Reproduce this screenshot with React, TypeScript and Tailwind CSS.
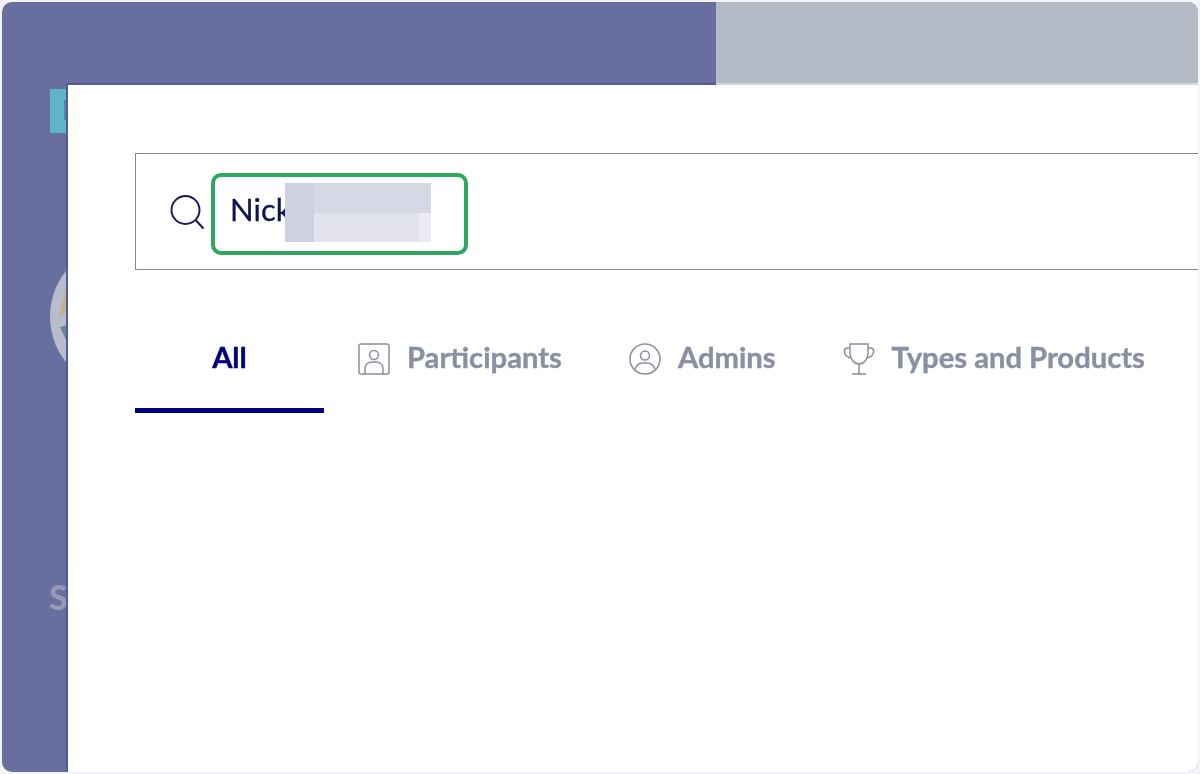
import React from 'react';

const fontLato = { fontFamily: 'Lato, "Liberation Sans", sans-serif' };

function SearchIcon() {
  return (
    <svg width="36" height="36" viewBox="0 0 36 36" fill="none" stroke="#1c1c5c" strokeWidth="2" className="shrink-0">
      <circle cx="16.5" cy="16" r="14" />
      <path d="M27 26.5l7 7.5" strokeLinecap="round" />
    </svg>
  );
}

function ParticipantIcon() {
  return (
    <svg width="32" height="32" viewBox="0 0 32 32" fill="none" stroke="#8a8fa3" strokeWidth="1.5" className="mt-[3px] shrink-0">
      <rect x="1" y="1" width="30" height="30" rx="2" />
      <circle cx="16" cy="12" r="4.5" />
      <path d="M7 31v-5c0-4.5 3-7 7-7h4c4 0 7 2.500 7 7v5" />
    </svg>
  );
}

function AdminIcon() {
  return (
    <svg width="32" height="32" viewBox="0 0 32 32" fill="none" stroke="#8a8fa3" strokeWidth="1.5" className="mt-[3px] shrink-0">
      <circle cx="16" cy="16" r="15" />
      <circle cx="16" cy="12.500" r="4.500" />
      <path d="M6 26c1.500-4 5-6 8-6h4c3 0 6.500 2 8 6" />
    </svg>
  );
}

function TrophyIcon() {
  return (
    <svg width="32" height="32" viewBox="0 0 32 32" fill="none" stroke="#8a8fa3" strokeWidth="1.5" className="mt-[3px] shrink-0">
      <path d="M7 1h18v9c0 6-4 11-9 11s-9-5-9-11z" />
      <path d="M7 5H4C0 6 0 13 8 15" />
      <path d="M25 5h3c4 1 4 8-4 10" />
      <path d="M16 21v10M9 31h14" />
    </svg>
  );
}

function BadgeLogo() {
  return (
    <svg width="147" height="147" viewBox="0 0 147 147" className="absolute left-[48px] top-[241px]">
      <circle cx="73.500" cy="73.500" r="73.500" fill="#b9bccc" />
      <path d="M17 40L9 75L26 56V40z" fill="#c8af84" />
      <path d="M10 84L26 80V110H22z" fill="#5f8c91" />
    </svg>
  );
}

function Tab({ icon, label, active, className }: { icon?: React.ReactNode; label: string; active?: boolean; className: string }) {
  return (
    <div className={`flex h-[97px] items-center justify-center gap-[17px] border-b-[5px] pb-[10px] text-[29.2px] font-bold ${active ? 'border-[#00007f] text-[#00007f]' : 'border-transparent text-[#8a8fa3]'} ${className}`}>
      {icon}
      <span className="blur-[0.4px] [-webkit-text-stroke:0.4px_currentColor]">{label}</span>
    </div>
  );
}

export default function App() {
  return (
    <div className="h-[774px] w-[1200px] overflow-hidden bg-[#f4f3f9] p-[2px]" style={fontLato}>
      <div className="relative h-full w-full overflow-hidden rounded-[10px] bg-[#686e9f]">
        {/* dimmed page behind the modal */}
        <div className="flex h-[83px]">
          <div className="w-[64px]" />
          <div className="w-[650px] border-b-[2px] border-[#545c97]" />
          <div className="flex-1 border-b-[2px] border-[#d3d6de] bg-[#b3b9c5]" />
        </div>
        <div className="absolute left-[48px] top-[87px] h-[44px] w-[24px] bg-[#5fb5c5]" />
        <div className="absolute left-[62px] top-[98px] h-[20px] w-[3px] bg-[#5f80ad]" />
        <BadgeLogo />
        <span className="absolute left-[47px] top-[569px] text-[34px] font-black text-[#9698b8] blur-[0.5px]">S</span>

        {/* modal */}
        <div className="absolute bottom-0 left-[64px] right-0 top-[83px] border-l-[2px] border-[#545c97] bg-white pl-[67px] pt-[68px]">
          <div className="flex h-[117px] items-center border border-r-0 border-[#85859a] pl-[33px]">
            <SearchIcon />
            <div className="relative ml-[6px] mt-[4px] flex h-[82px] w-[257px] items-center rounded-[10px] border-[4px] border-[#2ea85f] pl-[15px]">
              <span className="mb-[8px] text-[31px] text-[#12124f] blur-[0.4px] [-webkit-text-stroke:0.3px_currentColor]">Nick</span>
              {/* redacted surname */}
              <div className="absolute left-[70px] top-[6px] grid h-[59px] w-[146px] grid-cols-[29px_105px_12px] grid-rows-[30px_29px] blur-[0.5px]">
                <div className="bg-[#cfd0e1]" />
                <div className="bg-[#d6d8e6]" />
                <div className="bg-[#d6d8e6]" />
                <div className="bg-[#cfd0e1]" />
                <div className="bg-[#e3e3ef]" />
                <div className="bg-[#ebebf3]" />
              </div>
            </div>
          </div>

          <div className="mt-[46px] flex items-start">
            <Tab label="All" active className="w-[189px]" />
            <Tab label="Participants" icon={<ParticipantIcon />} className="ml-[34px]" />
            <Tab label="Admins" icon={<AdminIcon />} className="ml-[67px]" />
            <Tab label="Types and Products" icon={<TrophyIcon />} className="ml-[67px]" />
          </div>
        </div>
      </div>
    </div>
  );
}
